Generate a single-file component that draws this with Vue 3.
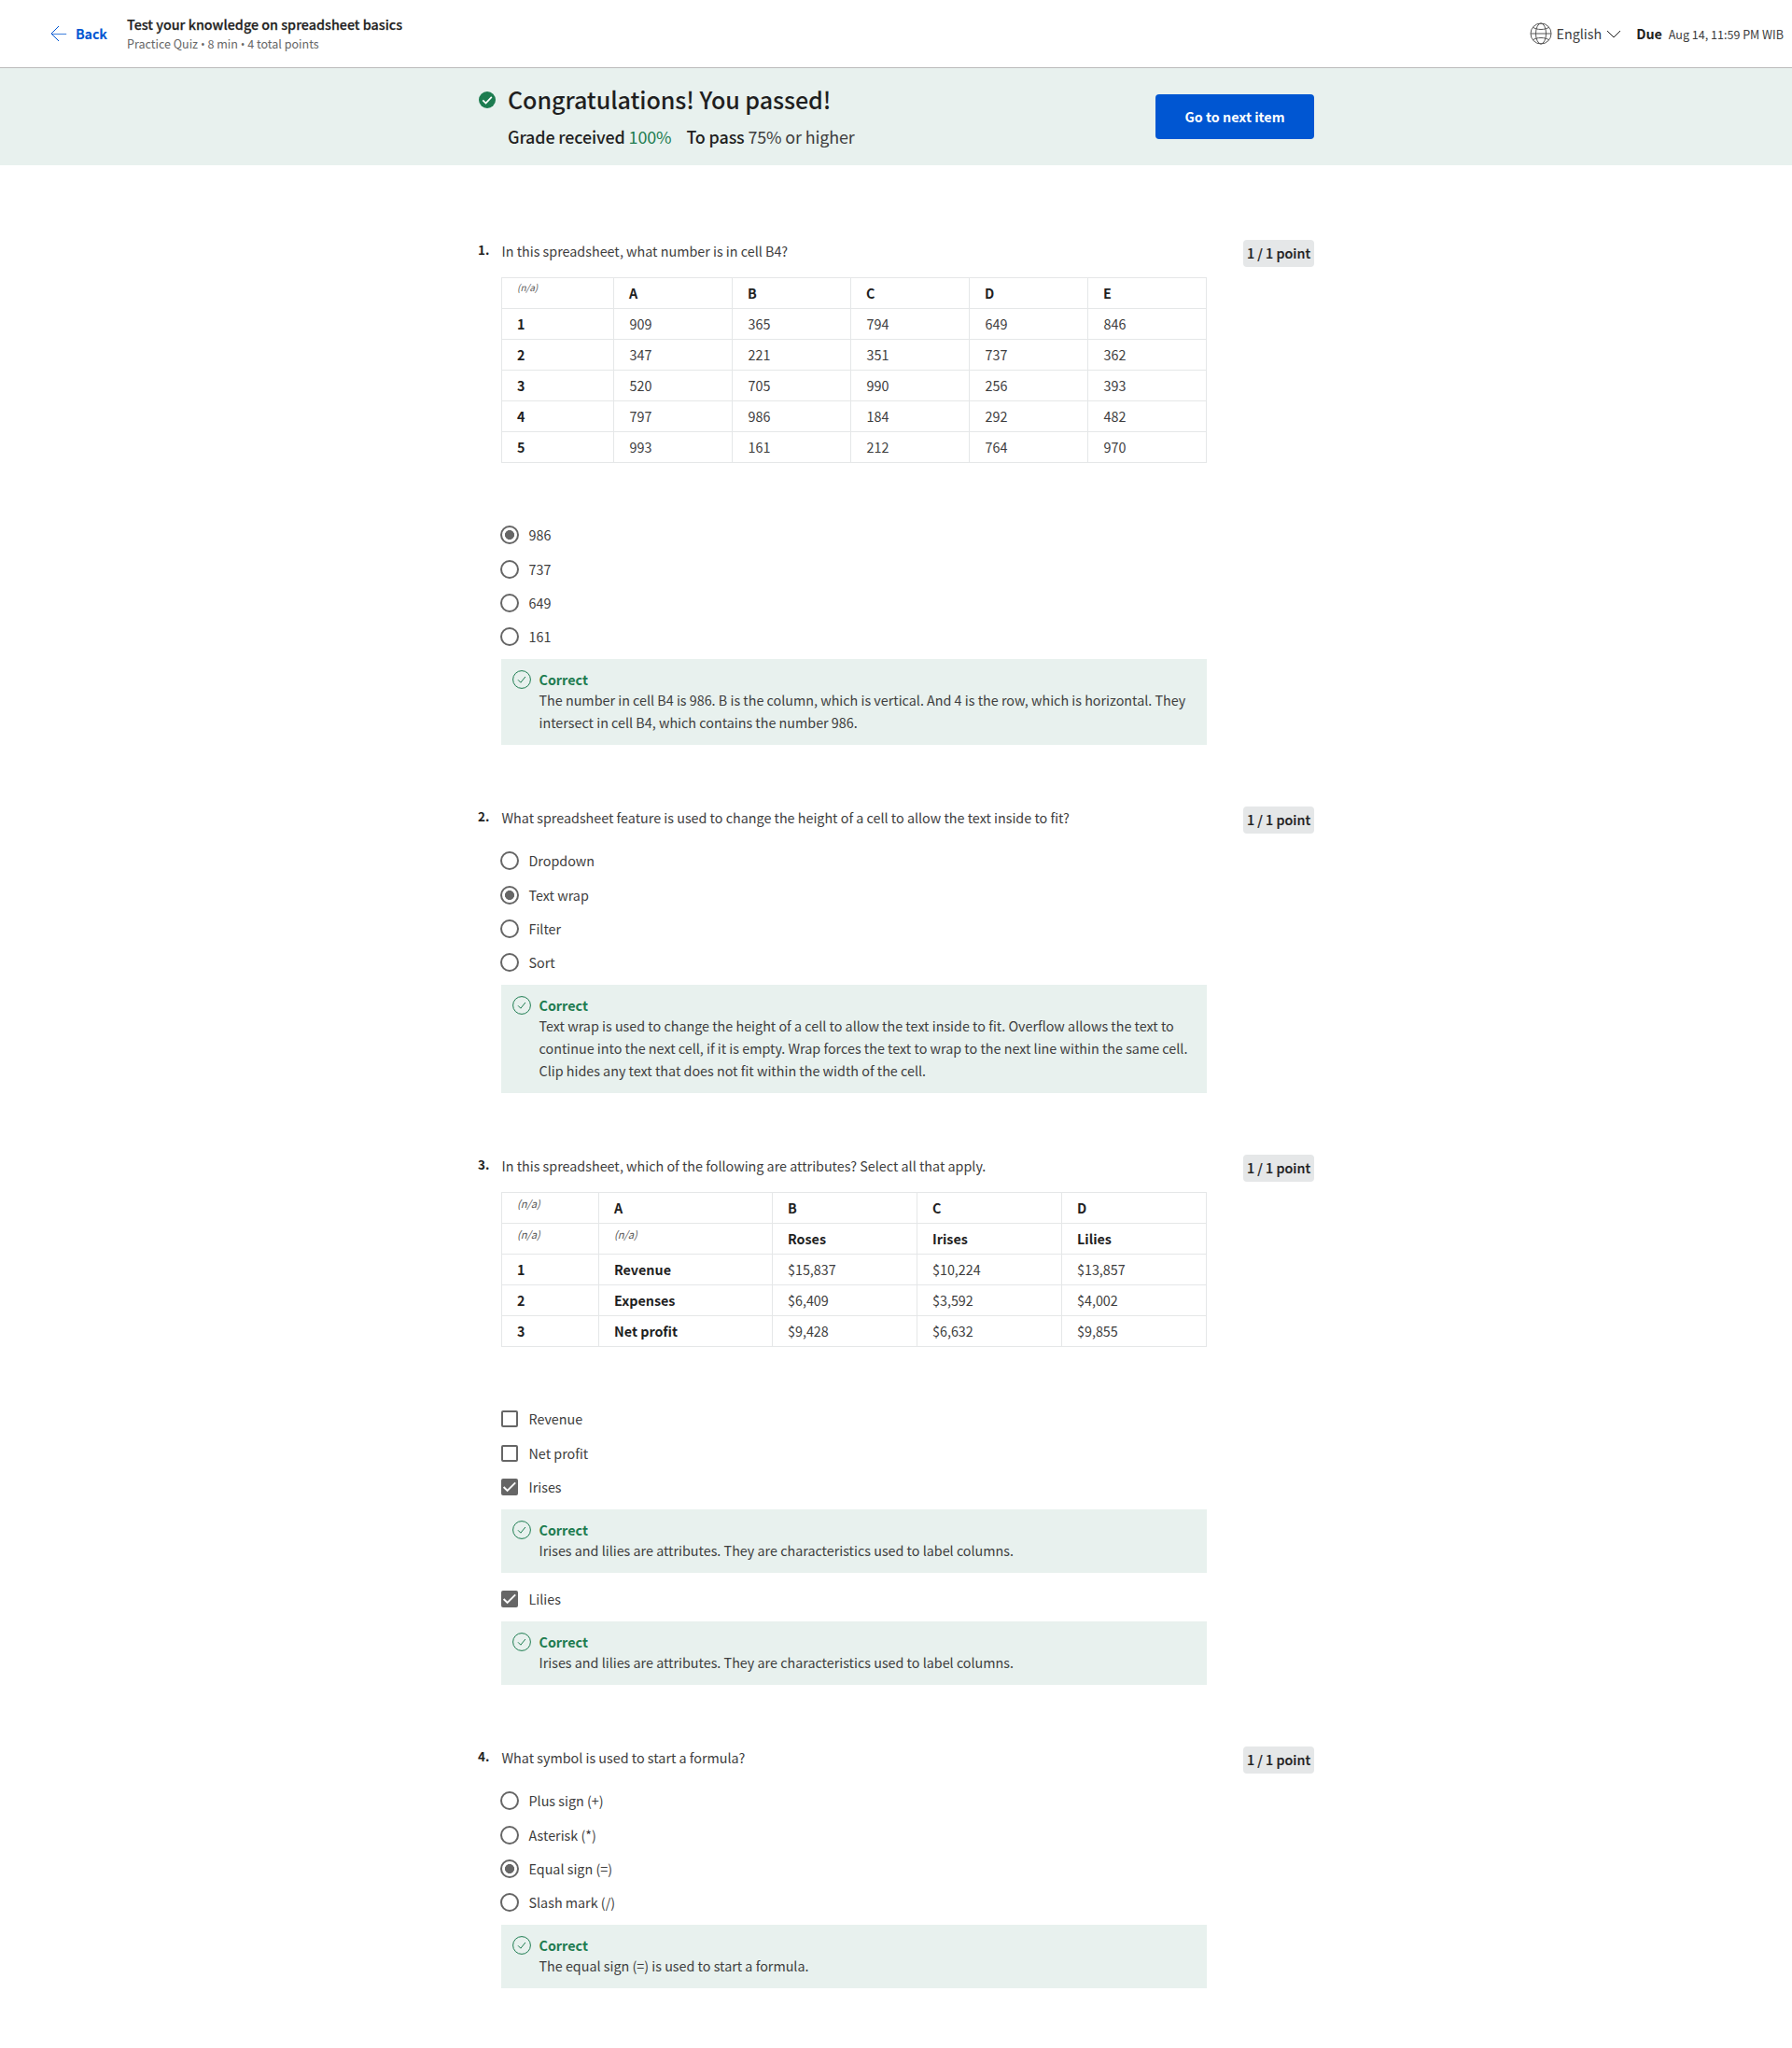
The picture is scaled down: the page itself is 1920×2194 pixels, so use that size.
<script setup>
const questions = [
  {
    prompt: 'In this spreadsheet, what number is in cell B4?',
    type: 'radio',
    table: {
      cls: 'five',
      rows: [
        ['', 'A', 'B', 'C', 'D', 'E'],
        ['1', '909', '365', '794', '649', '846'],
        ['2', '347', '221', '351', '737', '362'],
        ['3', '520', '705', '990', '256', '393'],
        ['4', '797', '986', '184', '292', '482'],
        ['5', '993', '161', '212', '764', '970'],
      ],
      headRows: 1,
      headCols: 1,
    },
    options: [
      { label: '986', on: true },
      { label: '737' },
      { label: '649' },
      {
        label: '161',
        note: ['The number in cell B4 is 986. B is the column, which is vertical. And 4 is the row, which is horizontal. They', 'intersect in cell B4, which contains the number 986.'],
      },
    ],
  },
  {
    prompt: 'What spreadsheet feature is used to change the height of a cell to allow the text inside to fit?',
    type: 'radio',
    options: [
      { label: 'Dropdown' },
      { label: 'Text wrap', on: true },
      { label: 'Filter' },
      {
        label: 'Sort',
        note: [
          'Text wrap is used to change the height of a cell to allow the text inside to fit. Overflow allows the text to',
          'continue into the next cell, if it is empty. Wrap forces the text to wrap to the next line within the same cell.',
          'Clip hides any text that does not fit within the width of the cell.',
        ],
      },
    ],
  },
  {
    prompt: 'In this spreadsheet, which of the following are attributes? Select all that apply.',
    type: 'checkbox',
    table: {
      cls: 'four',
      rows: [
        ['', 'A', 'B', 'C', 'D'],
        ['', '', 'Roses', 'Irises', 'Lilies'],
        ['1', 'Revenue', '$15,837', '$10,224', '$13,857'],
        ['2', 'Expenses', '$6,409', '$3,592', '$4,002'],
        ['3', 'Net profit', '$9,428', '$6,632', '$9,855'],
      ],
      headRows: 2,
      headCols: 2,
    },
    options: [
      { label: 'Revenue' },
      { label: 'Net profit' },
      { label: 'Irises', on: true, note: ['Irises and lilies are attributes. They are characteristics used to label columns.'] },
      { label: 'Lilies', on: true, note: ['Irises and lilies are attributes. They are characteristics used to label columns.'] },
    ],
  },
  {
    prompt: 'What symbol is used to start a formula?',
    type: 'radio',
    options: [
      { label: 'Plus sign (+)' },
      { label: 'Asterisk (*)' },
      { label: 'Equal sign (=)', on: true },
      { label: 'Slash mark (/)', note: ['The equal sign (=) is used to start a formula.'] },
    ],
  },
]
</script>

<template>
  <div class="page">
    <header class="topbar">
      <a class="back">
        <svg width="18" height="18" viewBox="0 0 18 18" fill="none" stroke="#0056d2" stroke-width="1">
          <path d="M9 1 1 9l8 8" /><path d="M1 9.5h16.2" stroke-opacity=".75" />
        </svg>
        <span>Back</span>
      </a>
      <div class="quiz">
        <div class="quiz-title">Test your knowledge on spreadsheet basics</div>
        <div class="quiz-meta">Practice Quiz <i>•</i> 8 min <i>•</i> 4 total points</div>
      </div>
      <div class="tools">
        <svg class="globe" width="24" height="24" viewBox="0 0 24 24" fill="none" stroke="#555" stroke-width="1">
          <circle cx="12" cy="12" r="11" />
          <ellipse cx="12" cy="12" rx="5.5" ry="11" />
          <path d="M1 12h22M3.3 5.2C5.5 6.7 8.5 7.5 12 7.5s6.500-.8 8.700-2.300M3.300 18.800c2.200-1.500 5.200-2.300 8.700-2.300s6.500.8 8.700 2.300" />
        </svg>
        <span class="lang">English</span>
        <svg class="chev" width="16" height="10" viewBox="0 0 16 10" fill="none" stroke="#1f1f1f" stroke-width="1">
          <path d="M1 1l7 7 7-7" />
        </svg>
        <b class="due">Due</b>
        <span class="date">Aug 14, 11:59 PM WIB</span>
      </div>
    </header>

    <section class="banner">
      <div class="banner-in">
        <svg class="pass" width="18" height="18" viewBox="0 0 18 18">
          <circle cx="9" cy="9" r="9" fill="#1d7c50" />
          <path d="M4.300 9.300l3.200 3.200 6.300-6.700" fill="none" stroke="#fff" stroke-width="1.700" />
        </svg>
        <div class="result">
          <h1>Congratulations! You passed!</h1>
          <p class="grades">
            <span class="g1"><b>Grade received</b> <span class="green">100%</span></span>
            <span><b>To pass</b> 75% or higher</span>
          </p>
        </div>
        <button class="next">Go to next item</button>
      </div>
    </section>

    <main>
      <section v-for="(q, i) in questions" :key="i" class="question">
        <div class="num">{{ i + 1 }}.</div>
        <div class="body">
          <div class="prompt">{{ q.prompt }}</div>
          <table v-if="q.table" :class="q.table.cls">
            <colgroup><col v-for="n in q.table.rows[0].length" :key="n" /></colgroup>
            <tbody>
              <tr v-for="(r, ri) in q.table.rows" :key="ri">
                <td v-for="(c, ci) in r" :key="ci" :class="{ head: ri < q.table.headRows || ci < q.table.headCols, empty: !c }">{{ c || '(n/a)' }}</td>
              </tr>
            </tbody>
          </table>
          <div class="options">
            <template v-for="(o, oi) in q.options" :key="oi">
              <div class="option">
                <span v-if="q.type === 'radio'" class="radio" :class="{ on: o.on }"></span>
                <span v-else class="check" :class="{ on: o.on }">
                  <svg v-if="o.on" width="18" height="18" viewBox="0 0 18 18" fill="none" stroke="#fff" stroke-width="1.900"><path d="M2.600 9l4 4 8.600-8.600" /></svg>
                </span>
                <span class="label">{{ o.label }}</span>
              </div>
              <div v-if="o.note" class="note">
                <svg width="20" height="20" viewBox="0 0 20 20" fill="none" stroke="#1d7c50" stroke-width="1">
                  <circle cx="10" cy="10" r="9.400" /><path d="M6 10.300l2.900 2.900 5-6.200" />
                </svg>
                <div>
                  <div class="correct">Correct</div>
                  <div v-for="l in o.note" :key="l" class="line">{{ l }}</div>
                </div>
              </div>
            </template>
          </div>
        </div>
        <div class="points">1 / 1 point</div>
      </section>
    </main>
  </div>
</template>

<style>
body {
  margin: 0;
  background: #fff;
}
</style>

<style scoped>
.page {
  width: 1920px;
  height: 2194px;
  overflow: hidden;
  font-family: "Noto Sans CJK SC", "Noto Sans", sans-serif;
  font-size: 14.33px;
  line-height: 24px;
  color: #3d3d3d;
  white-space: nowrap;
}
svg {
  display: block;
  flex: none;
}
b {
  color: #1f1f1f;
}
.topbar {
  display: flex;
  align-items: flex-start;
  height: 72px;
  border-bottom: 1px solid #bbb;
}
.back {
  display: flex;
  box-sizing: border-box;
  width: 136px;
  padding: 24px 0 0 54px;
  color: #0056d2;
  font-weight: 700;
  letter-spacing: -0.15px;
}
.back svg {
  margin: 3px 9px 0 0;
}
.quiz {
  padding-top: 14px;
}
.quiz-title {
  color: #1f1f1f;
  font-weight: 500;
  -webkit-text-stroke: 0.25px #1f1f1f;
}
.quiz-meta {
  font-size: 12.54px;
  line-height: 18px;
  color: #666;
}
.quiz-meta i {
  font-family: "Open Sans", "Noto Sans", sans-serif;
  font-style: normal;
  line-height: 1;
}
.tools {
  display: flex;
  margin-left: auto;
  padding: 24px 9px 0 0;
}
.lang {
  margin-left: 4px;
}
.chev {
  margin: 8px 16px 0 5px;
}
.date {
  margin-left: 7px;
  font-size: 12.54px;
  line-height: 25px;
}
.banner {
  height: 104px;
  background: #e8f1ee;
}
.banner-in {
  display: flex;
  width: 895px;
  margin-left: 513px;
}
.pass {
  margin: 25px 13px 0 0;
}
h1 {
  margin: 17px 0 0;
  font-size: 25.08px;
  line-height: 32px;
  font-weight: 500;
  letter-spacing: -0.08px;
  color: #1f1f1f;
}
.grades {
  margin: 8px 0 0;
  font-size: 17.91px;
  line-height: 32px;
  letter-spacing: -0.13px;
}
.g1 {
  margin-right: 16px;
}
.grades b {
  font-weight: 500;
}
.green {
  color: #1d7c50;
}
.next {
  width: 170px;
  height: 48px;
  margin: 28px 0 0 auto;
  padding: 0;
  border: 0;
  border-radius: 4px;
  background: #0056d2;
  color: #fff;
  font: 700 14.33px/48px "Noto Sans CJK SC", sans-serif;
}
main {
  width: 896px;
  margin: 80px 0 0 512px;
}
.question {
  display: flex;
  align-items: flex-start;
  margin-bottom: 66px;
}
.num {
  width: 25px;
  line-height: 20px;
  font-size: 13.5px;
  font-weight: 700;
  color: #1f1f1f;
}
.body {
  width: 756px;
}
.prompt {
  padding-left: 0.5px;
}
.points {
  width: 76px;
  height: 29px;
  margin-left: auto;
  border-radius: 4px;
  background: #e5e7e8;
  line-height: 28px;
  text-align: center;
  font-weight: 500;
  color: #1f1f1f;
  -webkit-text-stroke: 0.2px #1f1f1f;
}
table {
  width: 756px;
  margin: 16px 0 43px;
  border-collapse: separate;
  border-spacing: 0;
  border: solid #e5e7e8;
  border-width: 1px 0 0 1px;
  table-layout: fixed;
}
.five col:first-child {
  width: 120px;
}
.four col:first-child {
  width: 104px;
}
.four col:nth-child(2) {
  width: 186px;
}
td {
  box-sizing: border-box;
  height: 33px;
  padding: 1px 0 0 16.5px;
  border: solid #e5e7e8;
  border-width: 0 1px 1px 0;
  line-height: 30px;
  vertical-align: top;
}
td.head,
.four td {
  padding-left: 16px;
}
td.head {
  font-weight: 700;
  color: #1f1f1f;
}
td.empty {
  padding-top: 0;
  font-size: 10px;
  line-height: 20px;
  font-weight: 400;
  font-style: italic;
  color: #555;
}
.four td.empty {
  font-size: 11.2px;
  line-height: 22px;
}
.options {
  padding-top: 16px;
}
.option {
  display: flex;
  align-items: center;
  height: 36px;
}
.option:first-child {
  margin-bottom: 1px;
}
.radio {
  box-sizing: border-box;
  width: 20px;
  height: 20px;
  margin: 0 10.5px 0 -1px;
  border: 2px solid #666;
  border-radius: 50%;
}
.radio.on {
  background: radial-gradient(circle, #666 4.700px, transparent 5.300px);
}
.check {
  box-sizing: border-box;
  width: 18px;
  height: 18px;
  margin-right: 11.5px;
  border: 2px solid #666;
  border-radius: 2px;
}
.check.on {
  border: 0;
  background: #666;
}
.note {
  display: flex;
  margin-top: 6px;
  padding: 12px 0 12px 12px;
  background: #e8f1ee;
}
.note + .option {
  margin-top: 10px;
}
.note svg {
  margin-right: 8.5px;
}
.correct {
  line-height: 20px;
  color: #1d7c50;
  font-weight: 700;
}
</style>
